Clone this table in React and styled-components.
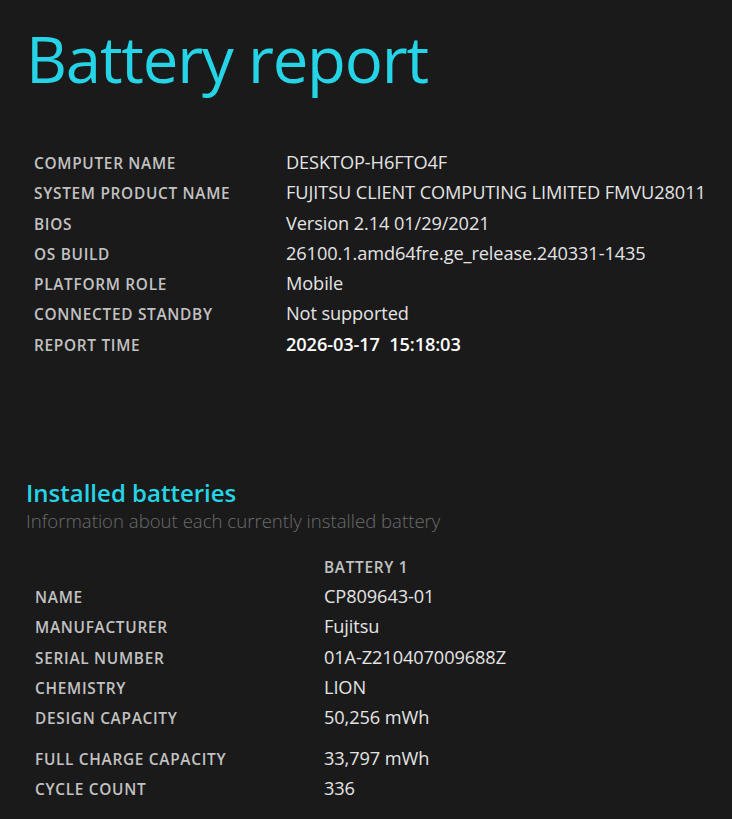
import React from 'react';
import styled, { createGlobalStyle } from 'styled-components';

const GlobalStyle = createGlobalStyle`
  html, body {
    margin: 0;
    padding: 0;
    background: #1a1a1a;
  }
  body {
    font-family: "Open Sans", "Noto Sans", sans-serif;
    color: #e6e6e6;
  }
`;

const systemInfo = [
  ['COMPUTER NAME', 'DESKTOP-H6FTO4F'],
  ['SYSTEM PRODUCT NAME', 'FUJITSU CLIENT COMPUTING LIMITED FMVU28011'],
  ['BIOS', 'Version 2.14 01/29/2021'],
  ['OS BUILD', '26100.1.amd64fre.ge_release.240331-1435'],
  ['PLATFORM ROLE', 'Mobile'],
  ['CONNECTED STANDBY', 'Not supported'],
  ['REPORT TIME', '2026-03-17\u00a0\u00a015:18:03', true],
];

const batteryInfo = [
  ['NAME', 'CP809643-01'],
  ['MANUFACTURER', 'Fujitsu'],
  ['SERIAL NUMBER', '01A-Z210407009688Z'],
  ['CHEMISTRY', 'LION'],
  ['DESIGN CAPACITY', '50,256 mWh'],
  ['FULL CHARGE CAPACITY', '33,797 mWh', true],
  ['CYCLE COUNT', '336'],
];

const App = () => (
  <Page>
    <GlobalStyle />
    <Title>Battery report</Title>
    <InfoTable>
      {systemInfo.map(([label, value, strong]) => (
        <Row key={label} $labelCol="252px">
          <Label>{label}</Label>
          <Value $strong={strong}>{value}</Value>
        </Row>
      ))}
    </InfoTable>

    <Section>
      <SectionTitle>Installed batteries</SectionTitle>
      <SectionSub>Information about each currently installed battery</SectionSub>
      <BatteryTable>
        <Row $labelCol="289px" $head>
          <span />
          <Label>BATTERY 1</Label>
        </Row>
        {batteryInfo.map(([label, value, spaced]) => (
          <Row key={label} $labelCol="289px" $spaced={spaced}>
            <Label>{label}</Label>
            <Value>{value}</Value>
          </Row>
        ))}
      </BatteryTable>
    </Section>
  </Page>
);

const Page = styled.div`
  width: 732px;
  height: 819px;
  overflow: hidden;
  padding: 14px 0 0 26px;
  box-sizing: border-box;
`;

const Title = styled.h1`
  margin: 0;
  font-weight: 400;
  font-size: 63.5px;
  line-height: 90px;
  color: #25d4e6;
  letter-spacing: -1.2px;
`;

const InfoTable = styled.div`
  display: flex;
  flex-direction: column;
  margin-top: 43px;
  padding-left: 8px;
`;

const Row = styled.div`
  display: grid;
  grid-template-columns: ${p => p.$labelCol} auto;
  align-items: baseline;
  height: ${p => (p.$spaced ? '40.3px' : p.$head ? '28px' : '30.3px')};
  padding-top: ${p => (p.$spaced ? '10px' : '0')};
  line-height: 30px;
  box-sizing: border-box;
`;

const Label = styled.div`
  font-size: 15.4px;
  font-weight: 600;
  color: #c2c2c2;
  letter-spacing: 0.7px;
  white-space: nowrap;
`;

const Value = styled.div`
  font-size: 18.2px;
  font-weight: ${p => (p.$strong ? 600 : 400)};
  color: ${p => (p.$strong ? '#ffffff' : '#e4e4e4')};
  white-space: nowrap;
  letter-spacing: -0.1px;
`;

const Section = styled.div`
  margin-top: 119px;
`;

const SectionTitle = styled.h2`
  margin: 0;
  font-size: 24px;
  font-weight: 600;
  line-height: 30px;
  color: #25d4e6;
`;

const SectionSub = styled.div`
  font-size: 18.6px;
  font-weight: 300;
  color: #6c6c6c;
  line-height: 26px;
`;

const BatteryTable = styled.div`
  display: flex;
  flex-direction: column;
  margin-top: 19px;
  padding-left: 9px;
`;

export default App;
